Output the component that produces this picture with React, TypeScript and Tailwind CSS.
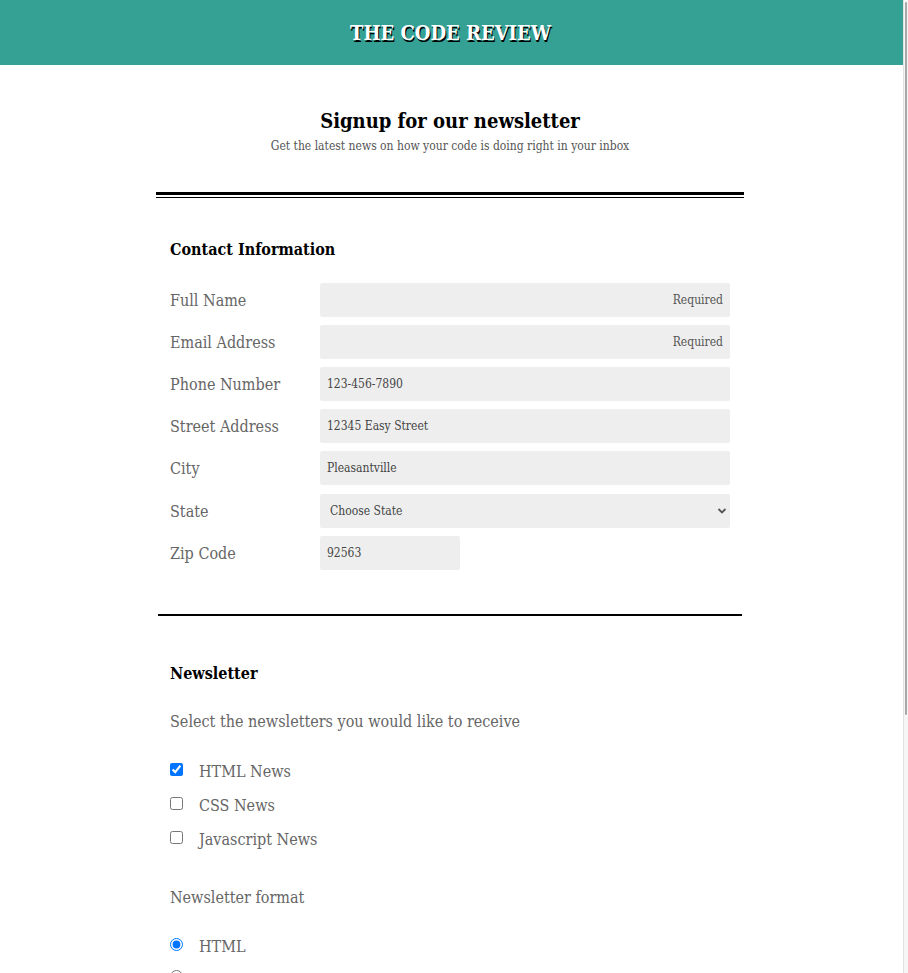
import React from "react";

const slab = "font-['Roboto_Slab','DejaVu_Serif_Condensed','DejaVu_Serif',serif]";

const fields = [
  { label: "Full Name", placeholder: "Required" },
  { label: "Email Address", placeholder: "Required" },
  { label: "Phone Number", value: "123-456-7890" },
  { label: "Street Address", value: "12345 Easy Street" },
  { label: "City", value: "Pleasantville" },
];

function FieldRow({ label, children }: { label: string; children: React.ReactNode }) {
  return (
    <div className="flex items-center">
      <label className="w-[150px] shrink-0 text-[16px] text-[#666]">{label}</label>
      {children}
    </div>
  );
}

export default function App() {
  return (
    <div className={`flex h-[973px] overflow-hidden bg-white ${slab}`}>
      <div className="flex-1 min-w-0">
        <header className="flex h-[65px] items-center justify-center bg-[#34a194]">
          <h1 className="-translate-x-px text-[20px] font-bold text-white [text-shadow:1px_2px_0_#000]">THE CODE REVIEW</h1>
        </header>

        <main className="ml-[156px] w-[588px]">
          <div className="pt-[42px] text-center">
            <h2 className="text-[20px] font-bold leading-[28px] text-black">Signup for our newsletter</h2>
            <p className="mt-[3px] text-[12px] leading-[16px] text-[#555]">
              Get the latest news on how your code is doing right in your inbox
            </p>
          </div>

          <div className="mt-[38px]">
            <div className="h-[3px] bg-black" />
            <div className="mt-[2px] h-px bg-black" />
          </div>

          <section className="px-[14px] pt-[40px]">
            <h3 className="text-[16px] font-bold leading-[24px] text-black">Contact Information</h3>
            <div className="mt-[22px] flex flex-col gap-[8px]">
              {fields.map(f => (
                <FieldRow key={f.label} label={f.label}>
                  <input
                    type="text"
                    readOnly
                    defaultValue={f.value}
                    placeholder={f.placeholder}
                    className={`h-[34px] w-full -translate-y-px rounded-[2px] bg-[#eee] px-[7px] text-[12px] text-[#444] outline-none placeholder:text-[#555] ${
                      f.placeholder ? "text-right" : ""
                    }`}
                  />
                </FieldRow>
              ))}
              <div className="pt-px">
                <FieldRow label="State">
                  <div className="relative h-[34px] w-full -translate-y-px">
                    <select className="h-[34px] w-full appearance-none rounded-[2px] bg-[#eee] pl-[10px] text-[12px] text-[#444] outline-none">
                      <option>Choose State</option>
                    </select>
                    <svg
                      className="pointer-events-none absolute right-[3px] top-[13px]"
                      width="10"
                      height="8"
                      viewBox="0 0 10 8"
                    >
                      <path d="M1.5 2 L5 5.5 L8.5 2" fill="none" stroke="#555" strokeWidth="1.8" />
                    </svg>
                  </div>
                </FieldRow>
              </div>
              <FieldRow label="Zip Code">
                <input
                  type="text"
                  readOnly
                  defaultValue="92563"
                  className="h-[34px] w-[140px] -translate-y-px rounded-[2px] bg-[#eee] px-[7px] text-[12px] text-[#444] outline-none"
                />
              </FieldRow>
            </div>
          </section>

          <div className="mx-[2px] mt-[43px] h-[2px] bg-black" />

          <section className="px-[14px] pt-[46px]">
            <h3 className="text-[16px] font-bold leading-[24px] text-black">Newsletter</h3>
            <p className="mt-[24px] text-[16px] leading-[24px] text-[#666]">
              Select the newsletters you would like to receive
            </p>
            <div className="mt-[26px] flex flex-col gap-[10px]">
              {["HTML News", "CSS News", "Javascript News"].map((n, i) => (
                <label key={n} className="flex h-[24px] items-center text-[16px] text-[#666]">
                  <input type="checkbox" defaultChecked={i === 0} className="m-0 h-[13px] w-[13px] -translate-y-[3px]" />
                  <span className="ml-[16px]">{n}</span>
                </label>
              ))}
            </div>
            <p className="mt-[34px] text-[16px] leading-[24px] text-[#666]">Newsletter format</p>
            <div className="mt-[25px] flex flex-col gap-[10px]">
              <label className="flex h-[24px] items-center text-[16px] text-[#666]">
                <input type="radio" name="format" defaultChecked className="m-0 h-[13px] w-[13px] -translate-y-[3px]" />
                <span className="ml-[16px]">HTML</span>
              </label>
              <div className="flex h-[24px] items-center">
                <input type="radio" name="format" className="m-0 h-[13px] w-[13px] -translate-y-[5px]" />
              </div>
            </div>
          </section>
        </main>
      </div>
      <div className="flex w-[5px] shrink-0 border-l border-[#e2e2e2] bg-[#f6f6f6] pl-[1px]">
        <div className="mt-[2px] h-[713px] w-[2px] rounded-full bg-[#a8a8a8]" />
      </div>
    </div>
  );
}
